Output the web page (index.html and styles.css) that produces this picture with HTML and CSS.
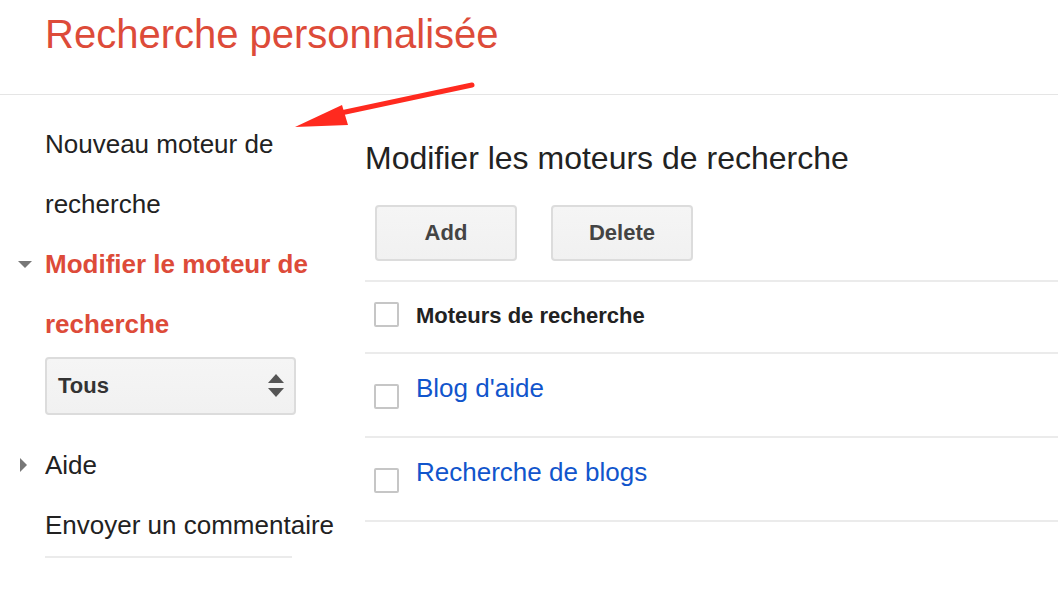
FILE: index.html
```html
<!DOCTYPE html>
<html lang="fr">
<head>
<meta charset="utf-8">
<title>Recherche personnalisée</title>
<link rel="stylesheet" href="styles.css">
</head>
<body>
<header class="top">
  <h1 class="title">Recherche personnalisée</h1>
</header>
<div class="layout">
  <nav class="side">
    <div class="nav-item"><span class="mk"></span><a class="nav-link">Nouveau moteur de recherche</a></div>
    <div class="nav-item active"><span class="mk"><span class="tri-down"></span></span><a class="nav-link">Modifier le moteur de recherche</a></div>
    <div class="nav-item"><span class="mk"></span>
      <div class="select"><span>Tous</span>
        <svg class="sel-arrows" width="16" height="24" viewBox="0 0 16 24"><polygon points="8,0 16,9 0,9" fill="#555"/><polygon points="0,14 16,14 8,23" fill="#555"/></svg>
      </div>
    </div>
    <div class="nav-item"><span class="mk"><span class="tri-right"></span></span><a class="nav-link">Aide</a></div>
    <div class="nav-item"><span class="mk"></span><a class="nav-link">Envoyer un commentaire</a></div>
    <div class="nav-item"><span class="mk"></span><div class="nav-rule"></div></div>
  </nav>
  <main class="main">
    <h2 class="heading">Modifier les moteurs de recherche</h2>
    <div class="buttons">
      <button class="btn">Add</button>
      <button class="btn">Delete</button>
    </div>
    <div class="table">
      <div class="row head"><span class="cb"></span><span class="head-text">Moteurs de recherche</span></div>
      <div class="row"><span class="cb cb-row"></span><a class="link">Blog d'aide</a></div>
      <div class="row"><span class="cb cb-row"></span><a class="link">Recherche de blogs</a></div>
    </div>
  </main>
</div>
<svg class="annot" width="1058" height="614" viewBox="0 0 1058 614">
  <line x1="472" y1="85" x2="336" y2="114" stroke="#ff2a1f" stroke-width="5" stroke-linecap="round"/>
  <polygon points="295,127 342,105 348,125" fill="#ff2a1f"/>
</svg>
</body>
</html>
```
FILE: styles.css
```css
* { box-sizing: border-box; }
html, body { margin: 0; padding: 0; background: #fff; }
body {
  font-family: "Liberation Sans", Arial, sans-serif;
  color: #222;
  width: 1058px;
  height: 614px;
  overflow: hidden;
  position: relative;
}
.top {
  height: 95px;
  border-bottom: 1px solid #e5e5e5;
  padding: 11px 0 0 45px;
}
.title {
  margin: 0;
  font-size: 40px;
  line-height: 46px;
  font-weight: normal;
  color: #dd4b39;
}
.layout {
  display: flex;
}
.side {
  width: 365px;
  flex: none;
  padding-top: 19px;
}
.nav-item {
  display: grid;
  grid-template-columns: 45px 300px;
}
.mk {
  height: 60px;
  display: flex;
  align-items: center;
}
.tri-down {
  margin-left: 18px;
  width: 0; height: 0;
  border-left: 7px solid transparent;
  border-right: 7px solid transparent;
  border-top: 7px solid #777;
}
.tri-right {
  margin-left: 20px;
  width: 0; height: 0;
  border-top: 7px solid transparent;
  border-bottom: 7px solid transparent;
  border-left: 7px solid #777;
}
.nav-link {
  font-size: 26px;
  line-height: 60px;
  color: #222;
}
.active .nav-link {
  color: #dd4b39;
  font-weight: bold;
}
.select {
  margin: 3px 0 20px;
  width: 251px;
  height: 58px;
  border: 2px solid #dcdcdc;
  border-radius: 4px;
  background: linear-gradient(#f5f5f5, #f1f1f1);
  display: flex;
  align-items: center;
  justify-content: space-between;
  padding: 0 10px 0 11px;
  font-size: 22px;
  font-weight: bold;
  color: #333;
}
.nav-rule {
  width: 247px;
  height: 2px;
  background: #ebebeb;
  margin-top: 1px;
}
.main {
  flex: 1;
  padding-top: 45px;
}
.heading {
  margin: 0;
  font-size: 32px;
  line-height: 37px;
  font-weight: normal;
  color: #222;
}
.buttons {
  display: flex;
  gap: 34px;
  margin: 28px 0 0 10px;
}
.btn {
  width: 142px;
  height: 56px;
  border: 2px solid #dcdcdc;
  border-radius: 4px;
  background: linear-gradient(#f5f5f5, #f1f1f1);
  font-family: "Liberation Sans", Arial, sans-serif;
  font-size: 22px;
  font-weight: bold;
  color: #444;
  padding: 0;
}
.table {
  margin-top: 19px;
  border-top: 2px solid #ebebeb;
}
.row {
  display: flex;
  align-items: flex-start;
  gap: 17px;
  padding: 19px 0 27px 9px;
  border-bottom: 2px solid #ebebeb;
}
.row.head {
  align-items: flex-start;
  padding: 20px 0 25px 9px;
}
.cb {
  flex: none;
  width: 25px;
  height: 25px;
  border: 2px solid #c6c6c6;
  border-radius: 2px;
  background: #fff;
}
.cb-row { margin-top: 11px; }
.head-text {
  font-size: 22px;
  font-weight: bold;
  color: #222;
  line-height: 25px;
  margin: 1px 0 -1px;
}
.link {
  font-size: 26px;
  line-height: 30px;
  color: #1155cc;
}
.annot {
  position: absolute;
  left: 0;
  top: 0;
  pointer-events: none;
}
```
